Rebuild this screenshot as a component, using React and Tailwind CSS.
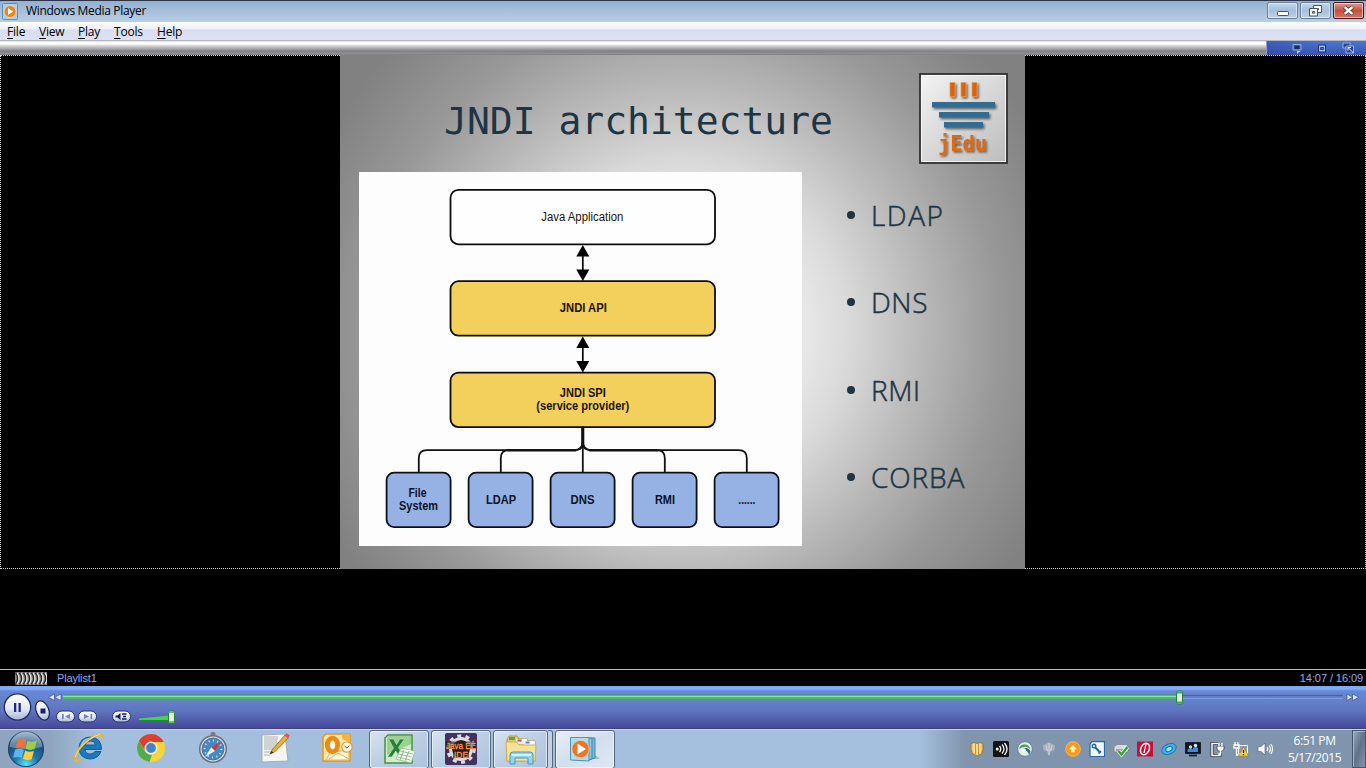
import React from "react";

const boxText = { fontFamily: '"Liberation Sans", Arial, sans-serif' };

function WmpIcon() {
  return (
    <svg width="16" height="17" viewBox="0 0 16 17">
      <rect x=".5" y=".5" width="15" height="16" rx="1" fill="#a9d3ea" stroke="#4f93bd" />
      <circle cx="8" cy="8.5" r="6" fill="#ee8220" stroke="#fbd9a8" strokeWidth=".8" />
      <path d="M6 5l5.2 3.5L6 12z" fill="#fff" />
    </svg>
  );
}

function WindowButton({ close, children }) {
  return (
    <div
      className={
        "flex h-[17px] w-[31px] items-center justify-center rounded-[2px] border shadow-[inset_0_0_0_1px_rgba(255,255,255,0.5)] " +
        (close
          ? "border-[#4a1420] bg-gradient-to-b from-[#dc9c92] via-[#c64f3d] to-[#cf7668]"
          : "border-[#6b7f99] bg-gradient-to-b from-[#c3d6ea] via-[#a5bfdc] to-[#bcd2e8]")
      }
    >
      {children}
    </div>
  );
}

function TitleBar() {
  return (
    <div className="flex h-[22px] shrink-0 items-start justify-between border-t border-[#2b3547] bg-gradient-to-b from-[#94b1d1] to-[#b9cee7] pl-[2px] pr-[2px]">
      <div className="flex items-center gap-[8px] pt-[1px]">
        <WmpIcon />
        <span className="font-['Open_Sans','Noto_Sans',sans-serif] text-[12px] leading-[18px] tracking-[-0.32px] text-black">
          Windows Media Player
        </span>
      </div>
      <div className="flex gap-[2px] pt-px">
        <WindowButton>
          <svg width="12" height="12" viewBox="0 0 12 12">
            <rect x=".5" y="6.500" width="11" height="4" rx=".8" fill="#fff" stroke="#46536a" />
          </svg>
        </WindowButton>
        <WindowButton>
          <svg width="13" height="12" viewBox="0 0 13 12">
            <path d="M4.500.5h8v7h-8z" fill="#fff" stroke="#46536a" />
            <path d="M7.500 3.500h2v1.500h-2z" fill="#acc4de" stroke="#46536a" strokeWidth=".9" />
            <path d="M.5 3.500h8v7.500h-8z" fill="#fff" stroke="#46536a" />
            <path d="M3.500 6.500h2.200v1.700H3.500z" fill="#acc4de" stroke="#46536a" />
          </svg>
        </WindowButton>
        <WindowButton close>
          <svg width="13" height="11" viewBox="0 0 13 11">
            <path d="M2.5 2l8 7M10.5 2l-8 7" stroke="#4b4048" strokeWidth="4.2" />
            <path d="M2.7 2.1l7.6 6.8M10.3 2.1L2.7 8.9" stroke="#fff" strokeWidth="2.5" />
          </svg>
        </WindowButton>
      </div>
    </div>
  );
}

function MenuBar() {
  const items = [
    ["File", "w-[32px]"],
    ["View", "w-[39px]"],
    ["Play", "w-[36px]"],
    ["Tools", "w-[43px]"],
    ["Help", "w-[40px]"],
  ];
  return (
    <div className="flex h-[19px] shrink-0 border-b border-[#b4b6c4] bg-[linear-gradient(#fdfdff_0,#eceff8_7px,#d8ddf0_8px,#dde2f3_18px)] pl-[7px] font-['Open_Sans','Noto_Sans',sans-serif] text-[12px] leading-[19px] tracking-[-0.2px] text-black">
      {items.map(([label, w]) => (
        <div key={label} className={w}>
          <span className="underline underline-offset-2">{label[0]}</span>
          {label.slice(1)}
        </div>
      ))}
    </div>
  );
}

function SkinBar() {
  return (
    <div className="flex h-[14px] shrink-0 bg-[linear-gradient(#c9c9d4_0,#ffffff_1px,#ffffff_3px,#d0d0d2_5px,#a2a2a6_8px,#808087_10px,#929296_13px,#77777c_14px)]">
      <div className="grow" />
      <div className="flex w-[100px] items-center gap-[15px] border-l border-[#8e9cc4] bg-[linear-gradient(90deg,rgba(40,56,140,0.35),rgba(0,0,0,0)_60%),linear-gradient(#4a76d2,#3c56ac)] pl-[25px]">
        <svg width="10" height="11" viewBox="0 0 10 11">
          <path d="M1 1.500h8v5.500H1z" fill="#3656a6" stroke="#8fb0ea" />
          <path d="M3 3.500h4v2H3z" fill="#16265e" stroke="#16265e" strokeWidth=".7" />
          <path d="M5 8h3v1H7l-2 2z" fill="#b8d2fa" />
        </svg>
        <svg width="10" height="11" viewBox="0 0 10 11">
          <path d="M1.500 2h7v7h-7z" fill="#9dbdf2" stroke="#1c2c66" />
          <path d="M3.500 4.500h3v2h-3z" fill="#4e72c4" stroke="#1c2c66" strokeWidth=".8" />
        </svg>
        <svg width="13" height="12" viewBox="0 0 13 12">
          <path d="M1 1h7v5H1z" fill="#29438e" stroke="#8fb0ea" />
          <path d="M4 4h7.500v7H4z" fill="#29438e" stroke="#8fb0ea" />
          <path d="M6 5.500l5.500 5.500M6 5.500h3M6 5.500v3" stroke="#e5efff" />
        </svg>
      </div>
    </div>
  );
}

function WideBox({ y, fill }) {
  return <rect x="91.200" y={y} width="264.500" height="54.500" rx="8" fill={fill} stroke="#0c0c0c" strokeWidth="1.800" />;
}

function DoubleArrow({ y }) {
  return (
    <g>
      <path d={`M223.500 ${y + 6}V${y + 30}`} stroke="#000" strokeWidth="1.700" />
      <path d={`M223.500 ${y}l6.500 11.500h-13zM223.500 ${y + 36}l6.500-11.500h-13z`} fill="#000" />
    </g>
  );
}

function Label({ x, y, w, bold = true, children }) {
  return (
    <text x={x} y={y} textLength={w} lengthAdjust="spacingAndGlyphs" fontWeight={bold ? 700 : 400}>
      {children}
    </text>
  );
}

function Diagram() {
  const columns = [0, 1, 2, 3, 4];
  return (
    <svg width="443" height="374" viewBox="-0.3 0.4 443 374" className="block bg-[#fdfdfd]">
      <WideBox y="18.200" fill="#fefefe" />
      <WideBox y="109.600" fill="#f3cf5c" />
      <WideBox y="201" fill="#f3cf5c" />
      <DoubleArrow y={73.5} />
      <DoubleArrow y={164.8} />
      <g fill="none" stroke="#111" strokeWidth="1.800">
        <path d="M223.500 255V301" />
        <path d="M223.500 255V270Q223.500 278.500 215.500 278.500H67.500Q59.500 278.500 59.500 286.500V301" />
        <path d="M223.500 255V270Q223.500 278.500 215.500 278.500H149.500Q141.500 278.500 141.500 286.500V301" />
        <path d="M223.500 255V270Q223.500 278.500 231.500 278.500H297.500Q305.500 278.500 305.500 286.500V301" />
        <path d="M223.500 255V270Q223.500 278.500 231.500 278.500H379.500Q387.500 278.500 387.500 286.500V301" />
        <path d="M223.500 256V275" strokeWidth="3" />
        <path d="M148 278.700H217M230 278.700H299" strokeWidth="2.200" />
      </g>
      {columns.map((i) => (
        <rect key={i} x={27.3 + 82 * i} y="301" width="64" height="54.500" rx="7.500" fill="#96b2e5" stroke="#0c1018" strokeWidth="1.800" />
      ))}
      <g textAnchor="middle" fontSize="12" fill="#0a1226" style={boxText}>
        <Label x="58.200" y="325.700" w="18">File</Label>
        <Label x="59.200" y="338.700" w="39">System</Label>
        <Label x="141.700" y="332.500" w="30">LDAP</Label>
        <Label x="223.200" y="332.500" w="24">DNS</Label>
        <Label x="305.700" y="332.500" w="20">RMI</Label>
        <Label x="387.500" y="332.500" w="17">......</Label>
      </g>
      <g textAnchor="middle" fontSize="12" fill="#1c1208" style={boxText}>
        <Label x="223" y="49.500" w="82" bold={false}>Java Application</Label>
        <Label x="224" y="140.700" w="47">JNDI API</Label>
        <Label x="223.500" y="225.700" w="46">JNDI SPI</Label>
        <Label x="223.500" y="238.500" w="93">(service provider)</Label>
      </g>
    </svg>
  );
}

function JEduLogo() {
  return (
    <svg width="89" height="91" viewBox="0 0 89 91">
      <defs>
        <linearGradient id="lg" x1="0" y1="0" x2="1" y2="1">
          <stop offset="0" stopColor="#f4f4f4" />
          <stop offset="1" stopColor="#bcbcbc" />
        </linearGradient>
        <filter id="ls" x="-20%" y="-20%" width="140%" height="150%">
          <feDropShadow dx="1.500" dy="1.800" stdDeviation=".9" floodColor="#444" floodOpacity=".8" />
        </filter>
      </defs>
      <rect x="1" y="1" width="87" height="89" fill="url(#lg)" stroke="#303030" strokeWidth="1.800" />
      <rect x="2.500" y="2.500" width="84" height="86" fill="none" stroke="#fff" strokeOpacity=".7" />
      <g filter="url(#ls)">
        <path d="M31 9.500h5v14h-5zM42 9.500h5v14h-5zM53 9.500h5v14h-5z" fill="#d96209" stroke="#f0a050" strokeWidth=".7" />
        <path d="M13 29h63v5.500H13zM20 39h50v5.500H20zM25 49h39v5.500H25z" fill="#326c92" />
        <text x="43.500" y="78" textAnchor="middle" textLength="49" fontSize="20.500" fontWeight="700" fill="#e0690c" className="font-['DejaVu_Sans_Mono',monospace]">jEdu</text>
      </g>
    </svg>
  );
}

function Slide() {
  return (
    <div className="-mt-px grid h-[514px] w-[685px] shrink-0 grid-cols-[462px_1fr] grid-rows-[117px_1fr] bg-[radial-gradient(ellipse_365px_370px_at_343px_275px,#ffffff_0%,#eeeeee_28%,#dadada_45%,#b8b8b8_66%,#989898_87%,#818181_110%)]">
      <h1 className="col-span-2 flex justify-between whitespace-nowrap pl-[104px] pr-[17px] pt-[18px] text-[38px] font-normal text-[#1e3543]">
        <span className="font-['DejaVu_Sans_Mono',monospace] leading-[96px]">JNDI architecture</span>
        <JEduLogo />
      </h1>
      <div className="pl-[19px]">
        <Diagram />
      </div>
      <ul className="flex flex-col gap-[47.600px] pl-[45px] pt-[22.500px] font-['Open_Sans',sans-serif] text-[28px] font-light leading-[40px] text-[#1e3543] [-webkit-text-stroke:0.500px_#1e3543]">
        {[
          ["LDAP", "tracking-[1.5px]"],
          ["DNS", "tracking-[0.6px]"],
          ["RMI", "tracking-[0.6px]"],
          ["CORBA", "tracking-[0.9px]"],
        ].map(([t, tr]) => (
          <li key={t} className="flex items-center gap-[16px]">
            <span className="size-[8px] rounded-full bg-[#1e3543]" />
            <span className={tr}>{t}</span>
          </li>
        ))}
      </ul>
    </div>
  );
}

function StatusBar() {
  return (
    <div className="flex h-[17px] shrink-0 items-center border-t border-[#b9bfc0] bg-black pl-[15px] pr-[3px] font-['Liberation_Sans',Arial,sans-serif] text-[11px] text-[#8fa8f4]">
      <svg width="32" height="13" viewBox="0 0 32 13">
        <rect width="32" height="13" fill="#8a8a8a" />
        {[0, 1, 2, 3, 4, 5, 6, 7].map((i) => (
          <g key={i} fill="none">
            <path d={`M${i * 4 + 0.5} .5q4.500 6 0 12`} stroke="#222" strokeWidth="1.500" />
            <path d={`M${i * 4 + 2} 1q4 5.500 0 11`} stroke="#e8e8e8" strokeWidth="1.200" />
          </g>
        ))}
      </svg>
      <span className="grow pl-[10px] tracking-[-0.15px]">Playlist1</span>
      <span className="tracking-[-0.08px]">14:07 / 16:09</span>
    </div>
  );
}

function Controls() {
  return (
    <div className="h-[43px] shrink-0 bg-[linear-gradient(#7ea6f8_0,#86acf8_3px,#6688d8_5px,#6482ca_14px,#5f74be_25px,#4c53a2_38px,#454a99_42px,#313b60_43px)]">
      <svg width="1366" height="42" viewBox="0 0 1366 42" className="block">
        <defs>
          <linearGradient id="btn" x1="0" y1="0" x2="0" y2="1">
            <stop offset="0" stopColor="#fff" />
            <stop offset=".55" stopColor="#e3e9f7" />
            <stop offset="1" stopColor="#a9b5d8" />
          </linearGradient>
        </defs>
        <path d="M63 9.500H1343" stroke="#4a60ae" strokeWidth="1.500" />
        <path d="M63 12.500H1343" stroke="#7e9ae0" />
        <path d="M63 10.800H1178" stroke="#37bc43" strokeWidth="4" />
        <path d="M63 10.500H1178" stroke="#7fe884" strokeWidth="1.300" />
        <g fill="#d9e3f6" stroke="#3f518f" strokeWidth=".7">
          <path d="M54.500 8v6.500L48.500 11.300zM61 8v6.500L54.500 11.300z" />
          <path d="M1347 8v6.500l5.500-3.200zM1352.500 8v6.500l6.500-3.200z" />
        </g>
        <rect x="1176.500" y="5" width="6" height="13" rx="1.500" fill="#e7e9e6" stroke="#25823a" />
        <path d="M1177 6.500h5M1177 16.500h5" stroke="#37b04a" strokeWidth="2.200" />
        <circle cx="17.500" cy="21" r="13.200" fill="url(#btn)" stroke="#1d2a5f" strokeWidth="1.300" />
        <path d="M14 17h2.300v9H14zM18.500 17h2.300v9h-2.300z" fill="#1a2a80" />
        <ellipse cx="42.500" cy="24.500" rx="6.300" ry="10" transform="rotate(-22 42.500 24.500)" fill="url(#btn)" stroke="#1d2a5f" strokeWidth="1.300" />
        <path d="M40.500 22.500h5v5h-5z" fill="#17236e" />
        <rect x="56.500" y="25" width="18" height="11" rx="5.500" fill="url(#btn)" stroke="#26346e" />
        <rect x="78.500" y="25" width="18" height="11" rx="5.500" fill="url(#btn)" stroke="#26346e" />
        <path d="M62 28h1.700v5H62zM70 28v5l-5-2.500zM90.500 28h1.700v5h-1.700zM84 28v5l5-2.500z" fill="#7484b4" />
        <rect x="112.500" y="25" width="18" height="11" rx="5.500" fill="url(#btn)" stroke="#26346e" />
        <path d="M115.500 29.500h2l3-2.500v7l-3-2.500h-2z" fill="#101d62" />
        <path d="M122 28h4.500M123 30.500h3M122 33h4.500" stroke="#101d62" strokeWidth="1.300" />
        <path d="M139 32.500l30-3v5h-30z" fill="#48cf58" />
        <path d="M139 34.500h30" stroke="#1b9030" />
        <rect x="168.500" y="25" width="6" height="12.500" rx="1.500" fill="#e7e9e6" stroke="#25823a" />
        <path d="M169 26.200h5M169 36.200h5" stroke="#57bf65" strokeWidth="1.800" />
      </svg>
    </div>
  );
}

function StartOrb() {
  return (
    <svg width="38" height="38" viewBox="0 0 38 38">
      <defs>
        <radialGradient id="orb" cx=".5" cy=".95" r=".95">
          <stop offset="0" stopColor="#5be5fa" />
          <stop offset=".35" stopColor="#1c79ae" />
          <stop offset=".7" stopColor="#1d4f7f" />
          <stop offset="1" stopColor="#84a5c0" />
        </radialGradient>
      </defs>
      <circle cx="19" cy="19" r="17.500" fill="url(#orb)" stroke="#24486c" strokeWidth="1.200" />
      <path d="M3 17A16 16 0 0135 17Q19 21 3 17" fill="#fff" opacity=".3" />
      <g transform="translate(-3 -2.500) scale(1.150)">
        <path d="M12 10.500q4-2 7.500.3l-1.800 7.200q-3.500-2-7.700-.2z" fill="#f0713a" />
        <path d="M20.500 11.500q3.500 2 8-.2l-2 7.500q-4 1.500-7.700-.3z" fill="#9ad046" />
        <path d="M9.600 19.300q4-1.600 7.700.3l-1.900 7q-3.500-2-7.500-.2z" fill="#5cb5ee" />
        <path d="M18.400 20q3.500 2 7.600.4l-1.900 7.200q-4 1.500-7.600-.5z" fill="#fbcf3e" />
      </g>
    </svg>
  );
}

function IeIcon() {
  return (
    <svg width="32" height="32" viewBox="0 0 32 32">
      <path d="M27 18.500H10.500q.5 4.500 5 4.500 3.500 0 5-2.500h6Q23.500 28 15.500 28 5 27.500 4.500 17 5 6.500 15.500 6 27 6.500 27 18.500zM21 14q-.5-4-5-4t-5.300 4z" transform="translate(1.500 -1)" fill="#1b79bd" stroke="#135791" strokeWidth=".9" />
      <path d="M8 14Q10 7 17 6.500" fill="none" stroke="#8bd3f8" strokeWidth="1.500" />
      <path d="M29.500 7C31 3 29 1 24 3 14 7 4 17 2 25c-1 4.500 2 5 6.500 2.500" fill="none" stroke="#eab52d" strokeWidth="2.200" />
      <path d="M27 2.300C19 4 5 15 2.300 25" fill="none" stroke="#fff0a8" strokeWidth=".7" />
    </svg>
  );
}

function ChromeIcon() {
  return (
    <svg width="30" height="30" viewBox="0 0 30 30">
      <circle cx="15" cy="15" r="14" fill="#f9d53a" />
      <path d="M2.900 8A14 14 0 0127.600 9H15a6.500 6.500 0 00-5.600 9.300z" fill="#dd4030" />
      <path d="M2.900 8l6.500 11A6.500 6.500 0 0016 21.500L13.500 29A14 14 0 012.900 8z" fill="#51aa4c" />
      <circle cx="15" cy="15" r="6.400" fill="#eef2f6" />
      <circle cx="15" cy="15" r="4.900" fill="#4284c9" />
    </svg>
  );
}

function SafariIcon() {
  return (
    <svg width="30" height="32" viewBox="0 0 30 32">
      <rect x="12.500" y="0" width="5" height="4" rx="1.500" fill="#777f88" />
      <circle cx="15" cy="17" r="13.300" fill="#d5dbe1" stroke="#68727e" strokeWidth="1.500" />
      <circle cx="15" cy="17" r="10.900" fill="#438bc7" stroke="#527086" />
      <circle cx="15" cy="17" r="8.500" fill="none" stroke="#c4e1f5" strokeWidth="1.800" strokeDasharray="1.200 3.200" />
      <path d="M23 9l-6 10-3.700-3.700z" fill="#d43a28" />
      <path d="M7 25l6.300-9.700L17 19z" fill="#f1f4f6" />
    </svg>
  );
}

function NoteIcon() {
  return (
    <svg width="30" height="32" viewBox="0 0 30 32">
      <path d="M2 3l23-1 3 27-26 1z" fill="#f6f6f4" stroke="#9ca1a5" strokeWidth=".8" />
      <path d="M4 5h14M4 7h14M4 9h13M4 11h13M4 13h13M4 15h10M4 17h9M4 20h7M4 23h6" stroke="#8c9094" strokeWidth=".7" />
      <path d="M10 22l2-4L25 3l3.500 2.800L14.500 20z" fill="#f3b02c" stroke="#80602b" strokeWidth=".8" />
      <path d="M24.500 3.500L26.500 1l3.300 2.500L28 6z" fill="#d65765" />
      <path d="M10 22l1.500-3 2 1.500z" fill="#333" />
    </svg>
  );
}

function OutlookIcon() {
  return (
    <svg width="31" height="32" viewBox="0 0 31 32">
      <path d="M4 2h24v27H1V5z" fill="#fae6aa" stroke="#df9b21" strokeWidth="1.500" />
      <path d="M20 2h8v8l-8-3z" fill="#f0b53c" />
      <path d="M9 19h18v9H4z" fill="#fff6dd" stroke="#e7b34f" />
      <path d="M7 27l9-6 11 6" fill="none" stroke="#e7b34f" />
      <ellipse cx="10.500" cy="13" rx="5.200" ry="6.800" fill="#fffaf0" stroke="#ea8b13" strokeWidth="4.800" />
      <circle cx="25" cy="15" r="5.200" fill="#fffaf0" stroke="#e8a12b" strokeWidth="1.300" />
      <path d="M22.500 14l2.500 2 2.500-2.500" fill="none" stroke="#986a1a" />
    </svg>
  );
}

function ExcelIcon() {
  return (
    <svg width="32" height="32" viewBox="0 0 32 32">
      <path d="M5 2h24v28H2V5z" fill="#d3ebc8" stroke="#419347" strokeWidth="1.500" />
      <path d="M4 5l2-2h22v8L4 22z" fill="#7bc370" opacity=".65" />
      <path d="M5.500 6h5l3 5.500L17 6h4.500l-6 8.500 6 9.500h-5l-3.700-6-4 6H4.500l6-9z" fill="#24823a" stroke="#cbe6c5" strokeWidth=".6" />
      <path d="M18 15l14 3-4 12-15-4z" fill="#fafdf8" stroke="#82b77d" strokeWidth=".7" />
      <path d="M17 18l13 3M15.500 21l13 3M14.500 24l13 3M21 17l-4 10M26 18l-4 10" stroke="#67a666" strokeWidth=".7" />
    </svg>
  );
}

function EclipseIcon() {
  return (
    <svg width="36" height="32" viewBox="-2 0 36 32">
      <rect width="32" height="32" rx="2" fill="#44315f" />
      <circle cx="16" cy="16" r="10.500" fill="#2a2022" stroke="#dcdde0" strokeWidth="3" />
      <circle cx="16" cy="16" r="13.300" fill="none" stroke="#dcdde0" strokeWidth="3" strokeDasharray="4 4.360" />
      <path d="M1 8.500h30v7.500H1zM8 17h16v8H8z" fill="#2a1c20" opacity=".65" />
      <g fill="#ff9632" stroke="#ff9632" strokeWidth=".3" fontSize="9.500" textAnchor="middle" style={boxText}>
        <text x="16" y="15.500" textLength="30" lengthAdjust="spacingAndGlyphs">Java EE</text>
        <text x="16" y="25" textLength="14" lengthAdjust="spacingAndGlyphs">IDE</text>
      </g>
    </svg>
  );
}

function FolderIcon() {
  return (
    <svg width="34" height="32" viewBox="0 0 34 32">
      <path d="M3 7l2-4h8l2 3h8l1 2h7v20H3z" fill="#e8ca66" stroke="#b8953d" />
      <path d="M5 4h6v3H5z" fill="#4dad48" />
      <path d="M12 6h11v5H12zM20 8h11v5H20z" fill="#f8f8f4" />
      <path d="M13.500 6.500h4v2h-4z" fill="#d44535" />
      <path d="M21.500 8.500h4v2h-4z" fill="#3d8fd6" />
      <path d="M2 9h11l2 3h17l-1 16H3z" fill="#f7e29a" stroke="#d0ae55" />
      <path d="M6 31V22q0-3 3-3h17q3 0 3 3v9h-5v-6H11v6z" fill="#92d5ed" stroke="#4799be" />
      <path d="M8 22h19" stroke="#e9fbff" strokeWidth="1.500" />
    </svg>
  );
}

function PlayerIcon() {
  return (
    <svg width="32" height="28" viewBox="0 0 32 28">
      <path d="M22 24l9 0-5-4z" fill="#8b9aad" opacity=".6" />
      <path d="M8 3h18v20l-6 2H8z" fill="#7ab9dc" stroke="#4387b1" />
      <path d="M5 3h18v21l-4 1H5z" fill="#8cc6e4" stroke="#4387b1" />
      <path d="M1.500 2.500h18.500v23.500l-18.500-1z" fill="#addbef" stroke="#4d94bd" />
      <circle cx="11.500" cy="14" r="8.700" fill="#ec7527" stroke="#fbcf97" strokeWidth=".8" />
      <path d="M8.500 8.500l8.500 5.500-8.500 5.500z" fill="#fff" />
    </svg>
  );
}

function TaskButton({ active, className, children }) {
  return (
    <div
      className={
        "flex h-[39px] shrink-0 items-center justify-center rounded-[3px] border border-[#56677f] pb-[2px] shadow-[inset_0_0_0_1px_rgba(255,255,255,0.55)] " +
        (active ? "bg-gradient-to-br from-[#e8eef7] via-[#d3dfed] to-[#dfe9f4] " : "bg-gradient-to-br from-[#d8e3f0] via-[#bccee3] to-[#adc4de] ") +
        (className || "w-[60px]")
      }
    >
      {children}
    </div>
  );
}

const tray = [
  <g key="a">
    <path d="M2 2.500l3-1 3 1 3-1 3 1V9q0 4-6 6-6-2-6-6z" fill="#efc462" stroke="#8d6a28" strokeWidth=".8" />
    <path d="M5 3v9.500M8 3v10.500M11 3v9.500" stroke="#fff1bd" strokeWidth="1" />
    <path d="M6.500 3v10M9.500 3v10" stroke="#b9842a" strokeWidth=".8" />
  </g>,
  <g key="b" fill="none">
    <rect x="0" y="0" width="16" height="16" rx="1.500" fill="#141414" />
    <circle cx="4.200" cy="8" r="1.500" fill="#fff" />
    <path d="M6.500 5q2.500 3 0 6M9 3.500q4 4.500 0 9M11.500 2q5 6 0 12" stroke="#fff" strokeWidth="1.300" />
  </g>,
  <g key="c">
    <circle cx="8" cy="8" r="7.300" fill="#e3efec" stroke="#557f82" strokeWidth=".8" />
    <path d="M2 8q1-5 6-4.500 4 0 5.500 5-3-3.500-6-2.500-3 0-5.500 2z" fill="#4aa14b" />
    <path d="M6 8q5-3 7.500 2.500L12 14q-.5-4-6-6z" fill="#236d9d" />
    <circle cx="7" cy="9.500" r="2" fill="#fff" />
  </g>,
  <g key="d">
    <path d="M8 1l3 2 3 1v4l-2 2-2 .5L8 15l-2-4.500L4 10 2 8V4l3-1z" fill="#a7afb9" />
    <path d="M8 2v12M5 4.500L6.500 10M11 4.500L9.500 10" stroke="#ccd3da" strokeWidth="1.200" />
  </g>,
  <g key="e">
    <circle cx="8" cy="8" r="7.300" fill="#f59a21" stroke="#ffb84a" />
    <path d="M8 4l4 4.300H9.700v3H6.300v-3H4z" fill="#fff1b5" />
  </g>,
  <g key="f">
    <path d="M1 3l2-2.300h12.500v14.800H1z" fill="#f3f8fd" stroke="#2869a5" strokeWidth="1.200" />
    <path d="M5 5l6.500 7" stroke="#1d67aa" strokeWidth="2" />
    <circle cx="5" cy="5" r="1.800" fill="#f3f8fd" stroke="#1d67aa" strokeWidth="1.400" />
    <path d="M9.500 12.500l2.500-2.500" stroke="#1d67aa" strokeWidth="1.500" />
  </g>,
  <g key="g">
    <path d="M1 6l3-2.500h10l1 2.500v5H1z" fill="#d7dbde" stroke="#7e858b" strokeWidth=".8" />
    <path d="M3 9h8" stroke="#626970" />
    <path d="M5.500 10l3 3.500L14.500 6" fill="none" stroke="#fff" strokeWidth="3.700" />
    <path d="M5.500 10l3 3.500L14.500 6" fill="none" stroke="#3ba436" strokeWidth="2.500" />
  </g>,
  <g key="h">
    <rect x="0" y=".5" width="16" height="15" fill="#c3123a" />
    <ellipse cx="8" cy="8" rx="4.200" ry="6" transform="rotate(25 8 8)" fill="none" stroke="#fff" strokeWidth="1.500" />
    <path d="M9 3L7 12" stroke="#fff" strokeWidth="1.200" />
  </g>,
  <g key="i" transform="rotate(-25 8 8)">
    <ellipse cx="8" cy="8" rx="7.500" ry="5" fill="#3fb4e9" stroke="#1c7ab5" />
    <ellipse cx="8" cy="8" rx="3.500" ry="2.300" fill="#9ce0fa" stroke="#1d6594" />
  </g>,
  <g key="j">
    <path d="M.5 1.500h15v11H.5z" fill="#0c1828" stroke="#18222c" />
    <path d="M2.500 11V8.500q3-2 5.500 0V11zM8 11V7q2.500-2 5 0v4z" fill="#4087dd" />
    <circle cx="5.500" cy="6" r="1.700" fill="#b9dcf9" />
    <circle cx="10.500" cy="4.500" r="1.700" fill="#e0effa" />
    <path d="M4 14.500h8" stroke="#18222c" strokeWidth="1.800" />
  </g>,
  <g key="k" fill="none">
    <path d="M9 2.500H3v12h8V12" stroke="#2b333c" strokeWidth="3" />
    <path d="M9 2.500H3v12h8V12" stroke="#fff" strokeWidth="1.500" />
    <path d="M8 5h7v3q-1 2.500-3.500 2.500T8 8z" fill="#fff" stroke="#2b333c" strokeWidth=".7" />
    <path d="M10 2v3M13 2v3M11.500 10v3H9" stroke="#fff" strokeWidth="1.300" />
  </g>,
  <g key="l">
    <path d="M5.500 4.500h9v8h-9z" fill="#8b9db1" stroke="#fff" />
    <path d="M2 1v4M5 1v4M1 4h5v3H1zM3.500 7v7H7" fill="none" stroke="#fff" strokeWidth="1.300" />
    <path d="M10.500 6l5 9h-10z" fill="#ffd531" stroke="#997619" strokeWidth=".6" />
    <path d="M10.500 9v3M10.500 13v1" stroke="#221d10" strokeWidth="1.300" />
  </g>,
  <g key="m" fill="none">
    <path d="M1 5.500h3L8 2v12L4 10.500H1z" fill="#fff" stroke="#495666" strokeWidth=".6" />
    <path d="M10 6q1.500 2 0 4M12 4.500q3 3.500 0 7M13.800 3q3.500 5 0 10" stroke="#fff" strokeWidth="1.100" />
  </g>,
];

function Taskbar() {
  const slot = "flex h-full w-[62px] shrink-0 items-center justify-center pb-[2px]";
  return (
    <div className="flex h-[39px] shrink-0 border-t border-[#c8d6e5] bg-[linear-gradient(90deg,#8fa5bf_0,#8fa5bf_50px,#a4bfdd_95px,#a5c0de_920px,#8095ad_965px,#8095ad_100%)]">
      <div className="flex w-[58px] shrink-0 items-center pb-px pl-[7px]"><StartOrb /></div>
      <div className={slot}><IeIcon /></div>
      <div className={slot}><ChromeIcon /></div>
      <div className={slot}><SafariIcon /></div>
      <div className={slot}><NoteIcon /></div>
      <div className={slot}><OutlookIcon /></div>
      <div className="flex gap-[2px] pl-px">
        <TaskButton><ExcelIcon /></TaskButton>
        <TaskButton><EclipseIcon /></TaskButton>
        <div className="flex w-[60px]">
          <TaskButton className="w-[55px]"><FolderIcon /></TaskButton>
          <div className="h-[39px] w-[5px] rounded-r-[3px] border-y border-r border-[#56677f] bg-[#c3d3e5]" />
        </div>
        <TaskButton active><PlayerIcon /></TaskButton>
      </div>
      <div className="grow" />
      <div className="flex items-center">
        {tray.map((icon, i) => (
          <div key={i} className="flex w-[24px] justify-center">
            <svg width="16" height="16" viewBox="0 0 16 16">{icon}</svg>
          </div>
        ))}
      </div>
      <div className="w-[75px] pt-[3px] text-center font-['Open_Sans','Noto_Sans',sans-serif] text-[12px] leading-[16.500px] tracking-[-0.4px] text-white">
        <div>6:51 PM</div>
        <div>5/17/2015</div>
      </div>
      <div className="w-[14px] border border-[#45566b] bg-gradient-to-br from-[#9aaaba] via-[#5f7289] to-[#8596a9] shadow-[inset_1px_1px_0_#a6b5c5]" />
    </div>
  );
}

export default function App() {
  return (
    <div className="flex h-[768px] w-[1366px] flex-col overflow-hidden bg-black">
      <TitleBar />
      <MenuBar />
      <SkinBar />
      <div className="flex h-[514px] shrink-0 border border-dotted border-[#d8d8d8] bg-black pl-[339px]">
        <Slide />
      </div>
      <div className="grow" />
      <StatusBar />
      <Controls />
      <Taskbar />
    </div>
  );
}
